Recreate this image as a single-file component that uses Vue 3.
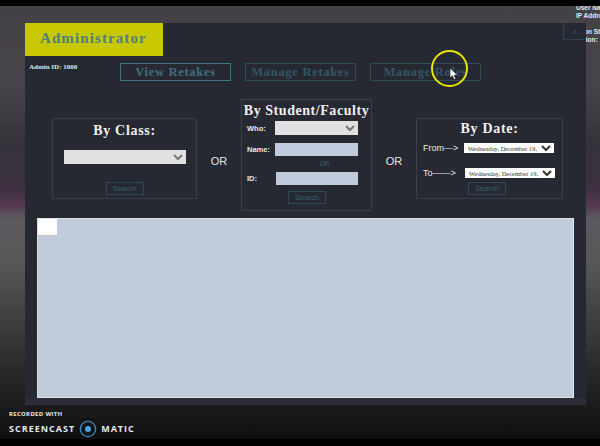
<script setup>
const navItems = [
  { label: 'View Retakes', active: true },
  { label: 'Manage Retakes', active: false },
  { label: 'Manage Roles', active: false },
]
const dateText = 'Wednesday, December 19, 2018'
</script>

<template>
  <div class="screen">
    <div class="stage">
      <div class="user-info top">
        <div>User Name:</div>
        <div>IP Address:</div>
      </div>
      <div class="user-info lower">
        <div>Logon Status:</div>
        <div class="ver">Version:</div>
      </div>

      <div class="panel">
        <button class="close">x</button>
        <div class="title-block">Administrator</div>

        <div class="nav-row">
          <div class="admin-id">Admin ID: 1000</div>
          <nav class="nav">
            <a v-for="item in navItems" :key="item.label" class="nav-btn" :class="{ active: item.active }">{{ item.label }}</a>
          </nav>
        </div>

        <div class="filters">
          <section class="box box-class">
            <h2>By Class:</h2>
            <select class="class-select"></select>
            <button class="search">Search</button>
          </section>

          <div class="or">OR</div>

          <section class="box box-student">
            <h2>By Student/Faculty</h2>
            <div class="field">
              <label>Who:</label>
              <select class="who-select"></select>
            </div>
            <div class="field name-field">
              <label>Name:</label>
              <input type="text" />
            </div>
            <div class="or-small">OR</div>
            <div class="field id-field">
              <label>ID:</label>
              <input type="text" />
            </div>
            <button class="search">Search</button>
          </section>

          <div class="or">OR</div>

          <section class="box box-date">
            <h2>By Date:</h2>
            <div class="date-row">
              <span class="date-label">From—&gt;</span>
              <select class="date-select"><option>{{ dateText }}</option></select>
            </div>
            <div class="date-row to">
              <span class="date-label">To——&gt;</span>
              <select class="date-select"><option>{{ dateText }}</option></select>
            </div>
            <button class="search">Search</button>
          </section>
        </div>

        <div class="results">
          <div class="corner"></div>
        </div>
      </div>

      <div class="highlight"></div>
      <svg class="cursor" width="10" height="14" viewBox="0 0 10 14">
        <path d="M1 1 L1 11 L3.4 8.8 L5 12.6 L6.8 11.8 L5.2 8.2 L8.4 8 Z" fill="#fff" stroke="#222" stroke-width="0.7" />
      </svg>

      <div class="watermark">
        <div class="rec">RECORDED WITH</div>
        <div class="brand">
          <span>SCREENCAST</span>
          <svg width="18" height="18" viewBox="0 0 18 18">
            <circle cx="9" cy="9" r="7.6" fill="#10141a" stroke="#3f86b8" stroke-width="1.4" />
            <circle cx="9" cy="9" r="3" fill="#4aa3e0" />
          </svg>
          <span>MATIC</span>
        </div>
      </div>
    </div>
  </div>
</template>

<style>
html, body {
  margin: 0;
  background: #000;
}
</style>

<style scoped>
.screen {
  width: 600px;
  height: 446px;
  background: #000;
  padding: 6px 0 7px;
  box-sizing: border-box;
  overflow: hidden;
  font-family: "Liberation Sans", Arial, sans-serif;
}

.stage {
  position: relative;
  height: 433px;
  padding: 17px 14px 0 25px;
  box-sizing: border-box;
  background: linear-gradient(180deg, #444146 0%, #47434a 18%, #35323a 32%, #3d3040 42%, #53384f 46%, #5c5a5e 49%, #565558 60%, #3a393b 75%, #1f1e20 90%, #0f0f10 100%);
  overflow: hidden;
}

.panel {
  position: relative;
  height: 382px;
  background: #272932;
  box-shadow: inset 0 -7px 0 #2b2e39;
}

.title-block {
  width: 138px;
  height: 33px;
  line-height: 30px;
  background: #c8c800;
  color: #4d7f80;
  font-family: "Liberation Serif", serif;
  font-size: 15px;
  font-weight: bold;
  letter-spacing: 1.1px;
  padding-left: 15px;
  box-sizing: border-box;
}

.close {
  position: absolute;
  top: 0;
  right: 0;
  width: 23px;
  height: 17px;
  padding: 0;
  background: transparent;
  border: 1px solid #2f4450;
  border-top: 0;
  border-right: 0;
  color: #3a5a68;
  font-size: 7px;
}

.nav-row {
  display: flex;
  margin-top: 7px;
}

.admin-id {
  width: 95px;
  padding-left: 4px;
  box-sizing: border-box;
  font-family: "Liberation Serif", serif;
  font-size: 7px;
  font-weight: bold;
  color: #e4e4e4;
}

.nav {
  display: flex;
  gap: 14px;
}

.nav-btn {
  width: 111px;
  height: 18px;
  line-height: 16px;
  box-sizing: border-box;
  text-align: center;
  border: 1px solid #2f4a58;
  color: #315666;
  font-family: "Liberation Serif", serif;
  font-size: 12.5px;
  font-weight: bold;
  letter-spacing: 0.7px;
}

.nav-btn.active {
  border-color: #3d7486;
  color: #41707f;
}

.filters {
  display: flex;
  align-items: flex-start;
  margin-top: 18px;
  padding-left: 27px;
}

.box {
  box-sizing: border-box;
  border: 1px solid #3b3e48;
  display: flex;
  flex-direction: column;
  color: #efefef;
}

.box h2 {
  margin: 0;
  font-family: "Liberation Serif", serif;
  font-size: 14px;
  font-weight: bold;
  letter-spacing: 0.7px;
  text-align: center;
  color: #f0f0f0;
}

.box-class {
  width: 145px;
  height: 81px;
  margin-top: 19px;
  align-items: center;
  padding-top: 3px;
}

.box-class h2 {
  line-height: 18px;
}

.class-select {
  width: 122px;
  height: 14px;
  margin-top: 10px;
}

.box-student {
  width: 131px;
  height: 112px;
  padding-top: 3px;
  align-items: center;
}

.box-student h2 {
  line-height: 16px;
  letter-spacing: 0.55px;
  white-space: nowrap;
}

.box-date {
  width: 147px;
  height: 81px;
  margin-top: 19px;
  align-items: center;
  padding-top: 1px;
}

.box-date h2 {
  line-height: 17px;
}

.or {
  width: 44px;
  margin-top: 56px;
  text-align: center;
  font-size: 11px;
  line-height: 13px;
  color: #e8e8e8;
}

select {
  appearance: auto;
  box-sizing: border-box;
  padding: 0;
  border: 0;
  border-radius: 0;
  background: #e1dfe0;
  color: #777;
  font-size: 8px;
}

.search {
  width: 38px;
  height: 13px;
  padding: 0;
  background: transparent;
  border: 1px solid #2c4a52;
  color: #33626e;
  font-family: "Liberation Sans", Arial, sans-serif;
  font-size: 7.5px;
  line-height: 11px;
}

.box-class .search {
  margin-top: 18px;
}

.field {
  display: flex;
  align-items: center;
  width: 100%;
  padding-left: 5px;
  box-sizing: border-box;
  margin-top: 2px;
}

.field label {
  width: 28px;
  flex: none;
  font-size: 7.5px;
  font-weight: bold;
  color: #e8e8e8;
}

.who-select {
  width: 83px;
  height: 14px;
}

.field input {
  width: 83px;
  height: 13px;
  box-sizing: border-box;
  padding: 0;
  border: 0;
  background: #bfcbdc;
}

.name-field {
  margin-top: 8px;
}

.or-small {
  margin-top: 4px;
  padding-left: 36px;
  font-size: 6.5px;
  line-height: 8px;
  color: #33626e;
}

.id-field {
  margin-top: 4px;
}

.id-field label {
  width: 29px;
}

.id-field input {
  width: 82px;
}

.box-student .search {
  margin-top: 6px;
  margin-left: 1px;
}

.date-row {
  display: flex;
  align-items: center;
  width: 100%;
  padding-left: 6px;
  box-sizing: border-box;
  margin-top: 6px;
}

.date-row.to {
  margin-top: 15px;
}

.date-label {
  width: 41px;
  flex: none;
  font-size: 9px;
  color: #e8e8e8;
  white-space: nowrap;
}

.date-select {
  width: 90px;
  height: 10px;
  background: #fff;
  color: #333;
  font-family: "Liberation Serif", serif;
  font-size: 6.5px;
}

.date-row.to .date-select {
  margin-left: 1px;
}

.box-date .search {
  margin-top: 4px;
  margin-right: 5px;
}

.results {
  width: 537px;
  height: 180px;
  margin: 7px 0 0 12px;
  box-sizing: border-box;
  background: #c0ccdc;
  border-left: 1px solid #d6dde7;
  border-top: 1px solid #dfe4ec;
  border-bottom: 1px solid #e3e7ee;
  border-right: 1px solid #e3e7ee;
}

.corner {
  width: 19px;
  height: 16px;
  background: #fff;
}

.user-info {
  position: absolute;
  font-size: 6.5px;
  font-weight: bold;
  line-height: 8px;
  color: #e8e8e8;
  white-space: nowrap;
}

.user-info.top {
  left: 576px;
  top: -2px;
}

.user-info.lower {
  left: 586px;
  top: 22px;
  text-indent: -14px;
  clip-path: inset(0 0 0 0);
}

.highlight {
  position: absolute;
  left: 431px;
  top: 44px;
  width: 37px;
  height: 37px;
  box-sizing: border-box;
  border: 2px solid #e6e600;
  border-radius: 50%;
}

.cursor {
  position: absolute;
  left: 449px;
  top: 61px;
}

.watermark {
  position: absolute;
  left: 9px;
  bottom: 0;
  color: #e6e8ea;
}

.rec {
  font-family: "Open Sans", sans-serif;
  font-size: 6px;
  font-weight: 700;
  line-height: 8px;
  letter-spacing: 0.3px;
}

.brand {
  display: flex;
  align-items: center;
  gap: 4px;
  height: 21px;
  font-family: "Open Sans", sans-serif;
  font-size: 9px;
  font-weight: 700;
  letter-spacing: 1px;
}
</style>
